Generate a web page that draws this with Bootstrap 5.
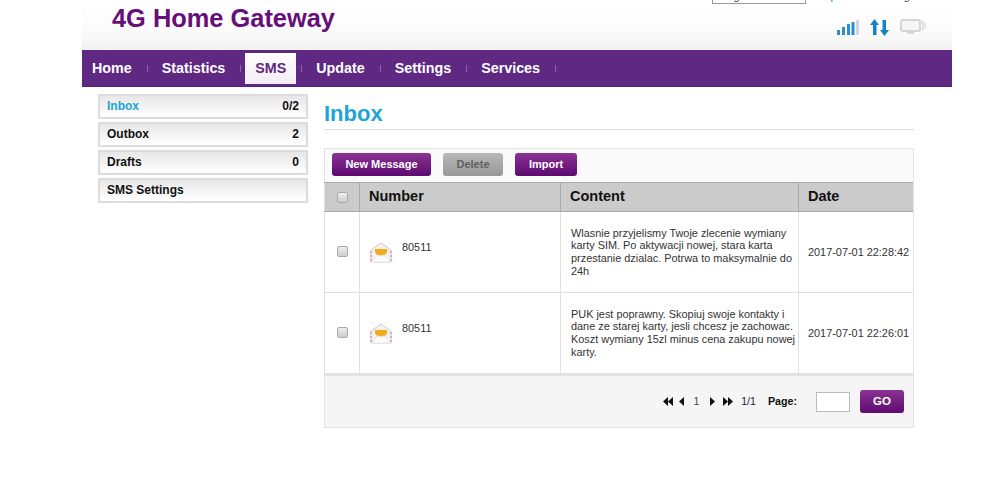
<!DOCTYPE html>
<html lang="en">
<head>
<meta charset="utf-8">
<title>4G Home Gateway</title>
<link rel="stylesheet" href="https://cdn.jsdelivr.net/npm/bootstrap@5.3.0/dist/css/bootstrap.min.css">
<style>
html,body{height:480px;overflow:hidden;background:#fff}
body{font-family:"Liberation Sans",Arial,sans-serif;font-size:11px;color:#222}
.shell{width:870px;margin-left:82px}
.topband{height:50px;background:linear-gradient(#fff,#fbfbfb 60%,#f2f2f2);overflow:hidden}
.brand-name{font-size:25.4px;font-weight:700;color:#660e7a;line-height:29px;padding:4px 0 0 30px;margin:0}
.top-right{width:240px}
.clipline{height:4px;overflow:hidden;font-size:11px;line-height:12px}
.clipline span{display:block;margin-top:-10px}
.langbox{width:94px;height:5px;margin-top:-1px;border:1px solid #999;background:#fff;overflow:hidden;font-size:11px;line-height:12px;color:#333;padding-left:7px}
.langbox span{display:block;margin-top:-10px}
.toplink-a{margin-left:8px;color:#1682c4}
.toplink-b{margin-left:55px;color:#444}
.sig-row{margin-top:15px;padding-right:25px;gap:11px}
.mainnav{height:37px;background:#5f2882;border-bottom:1px solid #54207a}
.nav-item-x{font-size:14.3px;font-weight:700;color:#fff;text-decoration:none;line-height:31px;height:31px;padding:0 10px;margin-top:3px}
.nav-item-x:hover{color:#fff}
.nav-item-x.now{background:linear-gradient(#fff,#f3ecf6);color:#5f2882}
.sep{width:1px;height:7px;background:#8d68a8;margin:0 4px 0 5px;align-self:center}
.layout{width:816px;margin-left:16px;margin-top:7px}
.sidebar{width:210px}
.sideitem{height:25px;margin-bottom:3px;border:2px solid #dcdcdc;background:linear-gradient(#e7e7e7,#fff);padding:0 7px;font-size:12px;font-weight:700;color:#111;line-height:21px}
.sideitem.on .sidelabel{color:#1ea5d6}
.mainpane{width:590px;margin-left:16px}
.pagehead{font-size:22px;font-weight:700;color:#1ea5d6;line-height:26px;padding-top:7px;height:36px;border-bottom:1px solid #ddd;margin:0 0 18px}
.framebox{border:1px solid #e3e3e3;border-left:0}
.toolrow{height:33px;padding:4px 7px 0;gap:12px;background:#fafafa;border-left:1px solid #e3e3e3}
.tb{height:23px;font-size:11px;font-weight:700;color:#fff;border:0;border-radius:3px;background:linear-gradient(#8a3393,#5e0a71);padding:0}
.tb.wide{width:99px}.tb.mid{width:62px}
.tb.off{width:60px;background:linear-gradient(#b9b9b9,#979797);color:#5f5f5f}
.gridtable{width:100%;table-layout:fixed;border-collapse:collapse}
.gridtable th{background:#cbcbcb;height:29px;font-size:14.5px;font-weight:700;color:#111;border-right:1px solid #aaa;border-bottom:1px solid #aaa;border-top:1px solid #aaa;padding:0 9px}
.gridtable td{height:81px;border-right:1px solid #e0e0e0;border-bottom:1px solid #e0e0e0;padding:0 9px 0 10px;font-size:10.9px;line-height:12.7px;vertical-align:middle;color:#333}
.gridtable th:last-child,.gridtable td:last-child{border-right:0}
.gridtable td:first-child,.gridtable th:first-child{border-left:1px solid #e0e0e0}
.gridtable th.col-check,.gridtable td.col-check{text-align:center;padding:0}
.boxc{width:11px;height:11px;display:inline-block;border:1px solid #aaa;border-radius:2px;background:linear-gradient(#eee,#ccc);vertical-align:middle}
td .boxc{margin-top:-2px}
.numcell{gap:10px}
.numcell span{margin-top:-1px}
.gridtable td.msgtext{padding-right:3px}
.gridtable td.datecell{padding:0 0 0 9px;white-space:nowrap}
.pagerrow{height:53px;background:#f5f5f5;border-top:2px solid #e3e3e3;border-left:1px solid #e3e3e3;padding-right:9px;font-size:10.5px}
.pgi{margin-right:6px}
.pgnum{color:#444;margin:0 11px 0 3px}
.pgall{color:#223}
.pglabel{font-weight:700;color:#111;margin:0 19px 0 12px;font-size:10.7px}
.pginput{width:34px;height:20px;border:1px solid #bbb;background:#fff;margin-right:10px;padding:0}
.gobtn{width:44px;height:23px;font-size:11.5px;font-weight:700;color:#fff;border:0;border-radius:3px;background:linear-gradient(#8a3393,#5e0a71);padding:0}
.arr-a{margin-right:8px}.arr-b{margin-right:8px}
</style>
</head>
<body>
<div class="shell">
  <header class="topband d-flex justify-content-between">
    <h1 class="brand-name">4G Home Gateway</h1>
    <div class="top-right d-flex flex-column">
      <div class="d-flex">
        <div class="langbox"><span>English</span></div>
        <div class="clipline d-flex"><span class="toplink-a">Help</span><span class="toplink-b">Login</span></div>
      </div>
      <div class="d-flex justify-content-end align-items-center sig-row">
        <svg width="22" height="16" viewBox="0 0 22 16"><rect x="0" y="10" width="3" height="5" fill="#2b8fce"/><rect x="5" y="7" width="3" height="8" fill="#2b8fce"/><rect x="10" y="4" width="3" height="11" fill="#2b8fce"/><rect x="14.500" y="2" width="3" height="13" fill="#2b8fce"/><rect x="19" y="0" width="3" height="15" fill="#cdd6dc"/></svg>
        <svg width="19" height="17" viewBox="0 0 19 17"><path d="M4.500 0 9 6H6.500V16H3V6H0Z" fill="#1682c4"/><path d="M14.500 17 10 11H12.500V1H16V11H19Z" fill="#1682c4"/></svg>
        <svg width="27" height="17" viewBox="0 0 27 17"><rect x="1" y="1" width="19" height="11" rx="2" fill="#f6f6f6" stroke="#d5d5d5" stroke-width="2"/><rect x="7" y="13" width="7" height="2" fill="#d8d8d8"/><path d="M22 2Q25 7 22 11" fill="none" stroke="#dcdcdc" stroke-width="2"/><path d="M25 3.500Q26.500 7 25 10" fill="none" stroke="#e8e8e8" stroke-width="1.500"/></svg>
      </div>
    </div>
  </header>
  <nav class="mainnav d-flex align-items-start">
    <a class="nav-item-x" href="#">Home</a><span class="sep"></span>
    <a class="nav-item-x" href="#">Statistics</a><span class="sep"></span>
    <a class="nav-item-x now" href="#">SMS</a><span class="sep"></span>
    <a class="nav-item-x" href="#">Update</a><span class="sep"></span>
    <a class="nav-item-x" href="#">Settings</a><span class="sep"></span>
    <a class="nav-item-x" href="#">Services</a><span class="sep"></span>
  </nav>
  <div class="layout d-flex">
    <aside class="sidebar">
      <div class="sideitem on d-flex justify-content-between"><span class="sidelabel">Inbox</span><span>0/2</span></div>
      <div class="sideitem d-flex justify-content-between"><span>Outbox</span><span>2</span></div>
      <div class="sideitem d-flex justify-content-between"><span>Drafts</span><span>0</span></div>
      <div class="sideitem"><span>SMS Settings</span></div>
    </aside>
    <main class="mainpane">
      <h2 class="pagehead">Inbox</h2>
      <div class="framebox">
        <div class="toolrow d-flex">
          <button class="tb wide">New Message</button>
          <button class="tb off">Delete</button>
          <button class="tb mid">Import</button>
        </div>
        <table class="gridtable">
          <colgroup><col style="width:35px"><col style="width:201px"><col style="width:238px"><col></colgroup>
          <thead><tr><th class="col-check"><span class="boxc"></span></th><th>Number</th><th>Content</th><th>Date</th></tr></thead>
          <tbody>
            <tr><td class="col-check"><span class="boxc"></span></td><td><div class="d-flex numcell"><svg width="22" height="21" viewBox="0 0 22 21"><path d="M1 8 11 1 21 8V20H1Z" fill="#f4f1ef" stroke="#cfcaca"/><path d="M1 9V20M21 9V20" stroke="#c87f8f" stroke-dasharray="2 2"/><path d="M5 7H17V10Q15 14 11 14Q7 14 5 10Z" fill="#f2ab1c"/><path d="M1 20 8 13Q11 15 14 13L21 20Z" fill="#fbfbfb" stroke="#e6e6e6"/></svg><span>80511</span></div></td><td class="msgtext">Wlasnie przyjelismy Twoje zlecenie wymiany karty SIM. Po aktywacji nowej, stara karta przestanie dzialac. Potrwa to maksymalnie do 24h</td><td class="datecell">2017-07-01 22:28:42</td></tr>
            <tr><td class="col-check"><span class="boxc"></span></td><td><div class="d-flex numcell"><svg width="22" height="21" viewBox="0 0 22 21"><path d="M1 8 11 1 21 8V20H1Z" fill="#f4f1ef" stroke="#cfcaca"/><path d="M1 9V20M21 9V20" stroke="#c87f8f" stroke-dasharray="2 2"/><path d="M5 7H17V10Q15 14 11 14Q7 14 5 10Z" fill="#f2ab1c"/><path d="M1 20 8 13Q11 15 14 13L21 20Z" fill="#fbfbfb" stroke="#e6e6e6"/></svg><span>80511</span></div></td><td class="msgtext">PUK jest poprawny. Skopiuj swoje kontakty i dane ze starej karty, jesli chcesz je zachowac. Koszt wymiany 15zl minus cena zakupu nowej karty.</td><td class="datecell">2017-07-01 22:26:01</td></tr>
          </tbody>
        </table>
        <div class="pagerrow d-flex justify-content-end align-items-center">
          <svg class="pgi" width="10" height="9" viewBox="0 0 10 9"><path d="M5 0V9L0 4.5ZM10 0V9L5 4.5Z" fill="#111"/></svg>
          <svg class="pgi" width="5" height="9" viewBox="0 0 5 9"><path d="M5 0V9L0 4.5Z" fill="#111"/></svg>
          <span class="pgnum">1</span>
          <svg class="pgi arr-a" width="5" height="9" viewBox="0 0 5 9"><path d="M0 0V9L5 4.5Z" fill="#111"/></svg>
          <svg class="pgi arr-b" width="10" height="9" viewBox="0 0 10 9"><path d="M0 0V9L5 4.5ZM5 0V9L10 4.5Z" fill="#111"/></svg>
          <span class="pgall">1/1</span>
          <span class="pglabel">Page:</span>
          <input class="pginput" type="text" aria-label="Page">
          <button class="gobtn">GO</button>
        </div>
      </div>
    </main>
  </div>
</div>
<script src="https://cdn.jsdelivr.net/npm/bootstrap@5.3.0/dist/js/bootstrap.bundle.min.js"></script>
</body>
</html>
